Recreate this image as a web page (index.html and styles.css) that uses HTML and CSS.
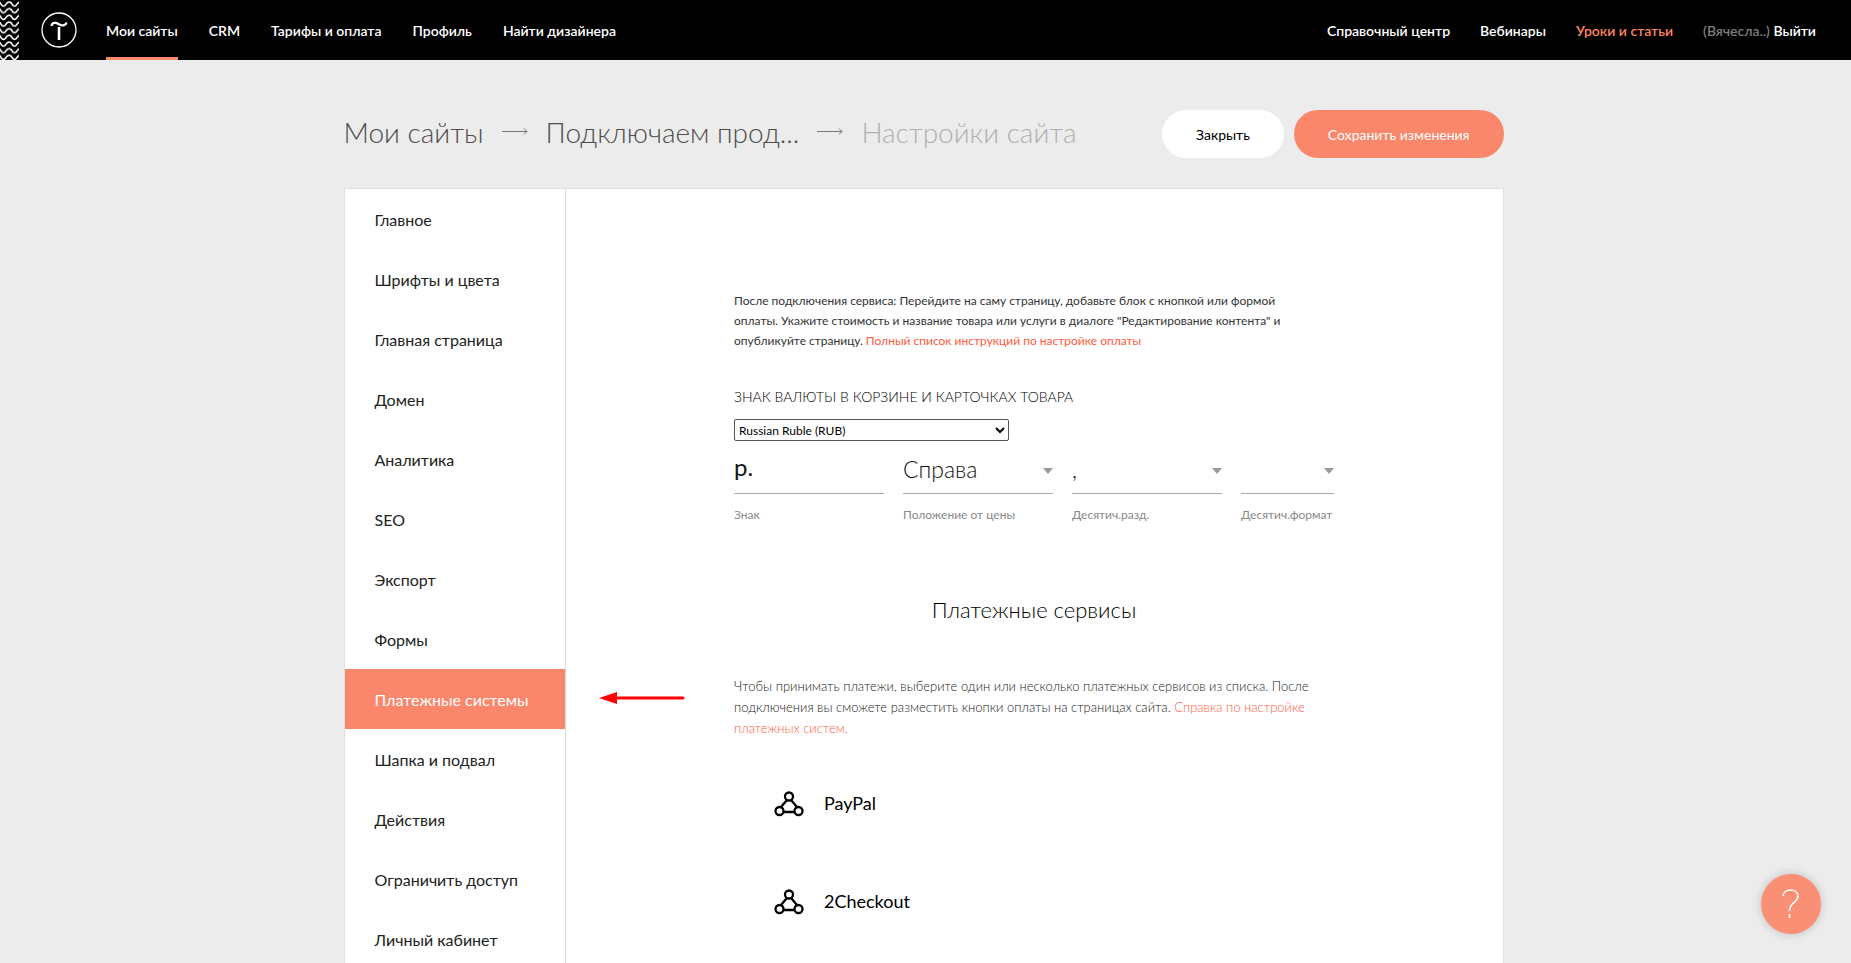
FILE: index.html
```html
<!DOCTYPE html>
<html lang="ru">
<head>
<meta charset="utf-8">
<title>Настройки сайта</title>
<link rel="stylesheet" href="styles.css">
</head>
<body>
<header class="topbar">
  <svg class="waves" width="19" height="60" aria-hidden="true">
    <defs>
      <pattern id="wave" width="11" height="6.670" patternUnits="userSpaceOnUse">
        <g fill="none" stroke="#fff" stroke-width="1.600">
          <path d="M-2 -4.670 C1.500 -4.670 0.500 -0.670 3.500 -0.670 S5.500 -4.670 9 -4.670 S11.500 -0.670 14.500 -0.670"/>
          <path d="M-2 2 C1.500 2 0.500 6 3.500 6 S5.500 2 9 2 S11.500 6 14.500 6"/>
        </g>
      </pattern>
    </defs>
    <rect width="19" height="60" fill="url(#wave)"/>
  </svg>
  <a class="logo" href="#" aria-label="Tilda">
    <svg width="36" height="36" viewBox="0 0 36 36" fill="none" stroke="#fff">
      <circle cx="18" cy="18" r="17" stroke-width="1.300"/>
      <path d="M10.500 14 C11 10.500 14.500 10 17.500 12 S24.500 14 25.500 10.500" stroke-width="2.200"/>
      <path d="M18 15 V28" stroke-width="2.600"/>
    </svg>
  </a>
  <nav class="nav">
    <a class="nav-link nav-link-active" href="#">Мои сайты</a>
    <a class="nav-link" href="#">CRM</a>
    <a class="nav-link" href="#">Тарифы и оплата</a>
    <a class="nav-link" href="#">Профиль</a>
    <a class="nav-link" href="#">Найти дизайнера</a>
  </nav>
  <nav class="nav nav-right">
    <a class="nav-link" href="#">Справочный центр</a>
    <a class="nav-link" href="#">Вебинары</a>
    <a class="nav-link nav-link-accent" href="#">Уроки и статьи</a>
    <a class="nav-link" href="#"><span class="user">(Вячесла..)</span> Выйти</a>
  </nav>
</header>

<main class="page">
  <div class="page-head">
    <div class="crumbs">
      <a class="crumb" href="#">Мои сайты</a>
      <svg class="crumb-arrow" width="26" height="10" viewBox="0 0 26 10" fill="none" stroke="#777"><path d="M0 4.500H25M22 1.500 L25 4.500 L22 7.500"/></svg>
      <a class="crumb" href="#">Подключаем прод...</a>
      <svg class="crumb-arrow" width="26" height="10" viewBox="0 0 26 10" fill="none" stroke="#777"><path d="M0 4.500H25M22 1.500 L25 4.500 L22 7.500"/></svg>
      <span class="crumb crumb-current">Настройки сайта</span>
    </div>
    <div class="actions">
      <button class="btn" type="button">Закрыть</button>
      <button class="btn btn-primary" type="button">Сохранить изменения</button>
    </div>
  </div>

  <div class="panel">
    <nav class="menu">
      <a class="menu-item" href="#">Главное</a>
      <a class="menu-item" href="#">Шрифты и цвета</a>
      <a class="menu-item" href="#">Главная страница</a>
      <a class="menu-item" href="#">Домен</a>
      <a class="menu-item" href="#">Аналитика</a>
      <a class="menu-item" href="#">SEO</a>
      <a class="menu-item" href="#">Экспорт</a>
      <a class="menu-item" href="#">Формы</a>
      <a class="menu-item menu-item-active" href="#">Платежные системы
        <svg class="pointer" width="86" height="12" viewBox="0 0 86 12" aria-hidden="true"><path d="M0 6 L18 0 V12Z" fill="red"/><path d="M17 6 H84" stroke="red" stroke-width="3" stroke-linecap="round"/></svg>
      </a>
      <a class="menu-item" href="#">Шапка и подвал</a>
      <a class="menu-item" href="#">Действия</a>
      <a class="menu-item" href="#">Ограничить доступ</a>
      <a class="menu-item" href="#">Личный кабинет</a>
    </nav>

    <section class="content">
      <p class="intro">После подключения сервиса: Перейдите на саму страницу, добавьте блок с кнопкой или формой<br>оплаты. Укажите стоимость и название товара или услуги в диалоге "Редактирование контента" и<br>опубликуйте страницу. <a class="link" href="#">Полный список инструкций по настройке оплаты</a></p>

      <label class="caption" for="currency">Знак валюты в корзине и карточках товара</label>
      <select class="currency" id="currency"><option>Russian Ruble (RUB)</option></select>

      <div class="fields">
        <div class="field">
          <input class="control control-text" id="sign" type="text" value="р.">
          <label class="hint" for="sign">Знак</label>
        </div>
        <div class="field field-select">
          <select class="control" id="position"><option>Справа</option></select>
          <label class="hint" for="position">Положение от цены</label>
        </div>
        <div class="field field-select">
          <select class="control" id="separator"><option>,</option></select>
          <label class="hint" for="separator">Десятич.разд.</label>
        </div>
        <div class="field field-select">
          <select class="control" id="format"><option></option></select>
          <label class="hint" for="format">Десятич.формат</label>
        </div>
      </div>

      <h2 class="heading">Платежные сервисы</h2>

      <p class="about">Чтобы принимать платежи, выберите один или несколько платежных сервисов из списка. После<br>подключения вы сможете разместить кнопки оплаты на страницах сайта. <a class="link" href="#">Справка по настройке<br>платежных систем.</a></p>

      <div class="services">
        <a class="service" href="#">
          <svg width="30" height="26" viewBox="0 0 30 26" fill="none" stroke="#000" stroke-width="2.300"><path d="M13 9 L7 16 M17 9 L23 16 M10 21 H20"/><circle cx="15" cy="5.500" r="4"/><circle cx="5.500" cy="20" r="4"/><circle cx="24.500" cy="20" r="4"/></svg>
          <span class="service-name">PayPal</span>
        </a>
        <a class="service" href="#">
          <svg width="30" height="26" viewBox="0 0 30 26" fill="none" stroke="#000" stroke-width="2.300"><path d="M13 9 L7 16 M17 9 L23 16 M10 21 H20"/><circle cx="15" cy="5.500" r="4"/><circle cx="5.500" cy="20" r="4"/><circle cx="24.500" cy="20" r="4"/></svg>
          <span class="service-name">2Checkout</span>
        </a>
      </div>
    </section>
  </div>
</main>

<button class="help" type="button" aria-label="Помощь">
  <svg width="20" height="30" viewBox="0 0 20 30" fill="none" stroke="#fff" stroke-width="1.500"><path d="M2 7 C2 -1 17 -1 17 7 C17 14 8.500 13 8.500 22 M8.500 25 V29"/></svg>
</button>
</body>
</html>
```

FILE: styles.css
```css
* { box-sizing: border-box; }

body {
  margin: 0;
  height: 100vh;
  overflow: hidden;
  background: #ececec;
  color: #000;
  font-family: Lato, "Open Sans", sans-serif;
}

a { color: inherit; text-decoration: none; }
button, input, select { font-family: inherit; }

.topbar {
  display: flex;
  height: 60px;
  background: #000;
  color: #fff;
}
.waves { flex: none; }
.logo { margin: 12px 29px 0 22px; }
.nav { display: flex; gap: 31px; }
.nav-right { gap: 30px; margin-left: auto; margin-right: 35px; }
.nav-link {
  height: 60px;
  line-height: 62px;
  font-size: 14px;
  font-weight: 600;
  white-space: nowrap;
}
.nav-link-active { border-bottom: 3px solid #fa876b; }
.nav-link-accent { color: #ff855d; }
.user { color: #7d7d7d; }

.page { max-width: 1160px; margin: 0 auto 0 calc(50% - 582px); }
.page-head {
  display: flex;
  align-items: center;
  justify-content: space-between;
  padding: 50px 0 30px;
}
.crumbs { display: flex; align-items: center; gap: 18px; padding-bottom: 4px; white-space: nowrap; }
.crumb { font-size: 28px; font-weight: 300; line-height: 44px; color: #4c4c4c; }
.crumb-current { color: #b0b0b0; }
.actions { display: flex; gap: 10px; }
.btn {
  height: 48px;
  padding: 0 34px;
  border: 0;
  border-radius: 24px;
  background: #fff;
  color: #000;
  font-size: 14px;
  white-space: nowrap;
}
.btn-primary { background: #fa876b; color: #fff; }

.panel {
  display: grid;
  grid-template-columns: 221px 1fr;
  border: 1px solid #e0e0e0;
  background: #fff;
}
.menu { border-right: 1px solid #dcdcdc; }
.menu-item {
  position: relative;
  display: block;
  height: 60px;
  padding-left: 30px;
  font-size: 16px;
  line-height: 62px;
  color: #222;
}
.menu-item-active { background: #fa876b; color: #fff; }
.pointer { position: absolute; left: 254px; top: 23px; }

.content { width: 600px; margin: 0 auto; padding-top: 102px; }
.intro { margin: 0; font-size: 12px; line-height: 20px; color: #333; white-space: nowrap; }
.link { color: #ff5a3c; }
.caption {
  display: block;
  margin-top: 36px;
  font-size: 14px;
  font-weight: 300;
  line-height: 20px;
  text-transform: uppercase;
}
.currency {
  display: block;
  width: 275px;
  height: 22px;
  margin-top: 12px;
  border: 1px solid #555;
  border-radius: 2px;
  background: #fff;
  font-size: 12px;
}
.fields {
  display: grid;
  grid-template-columns: 150px 150px 150px 93px;
  gap: 19px;
  margin-top: 7px;
}
.field { position: relative; }
.control {
  display: block;
  width: 100%;
  height: 46px;
  padding: 0 0 4px;
  border: 0;
  border-bottom: 1px solid #aaa;
  border-radius: 0;
  appearance: none;
  background: none;
  color: #111;
  font-size: 23px;
  font-weight: 300;
}
.control-text { padding-bottom: 8px; font-size: 24px; font-weight: 400; }
.field-select::after {
  content: "";
  position: absolute;
  right: 0;
  top: 20px;
  border: 5px solid transparent;
  border-top: 6px solid #999;
  border-bottom: 0;
}
.hint {
  display: block;
  margin-top: 11px;
  font-size: 12px;
  line-height: 20px;
  color: #888;
  white-space: nowrap;
}
.heading {
  margin: 67px 0 0;
  font-size: 22px;
  font-weight: 300;
  line-height: 36px;
  text-align: center;
}
.about {
  margin: 48px 0 0;
  font-size: 13px;
  font-weight: 300;
  line-height: 21px;
  color: #222;
  white-space: nowrap;
}
.services { padding: 16px 0 0 40px; }
.service {
  display: flex;
  align-items: center;
  gap: 20px;
  height: 98px;
  font-size: 18px;
}
.service-name { padding-bottom: 2px; }

.help {
  position: fixed;
  right: 30px;
  bottom: 29px;
  display: grid;
  place-items: center;
  width: 60px;
  height: 60px;
  padding: 0;
  border: 0;
  border-radius: 50%;
  background: #f99075;
  box-shadow: 0 0 10px rgba(0, 0, 0, 0.2);
}
```
